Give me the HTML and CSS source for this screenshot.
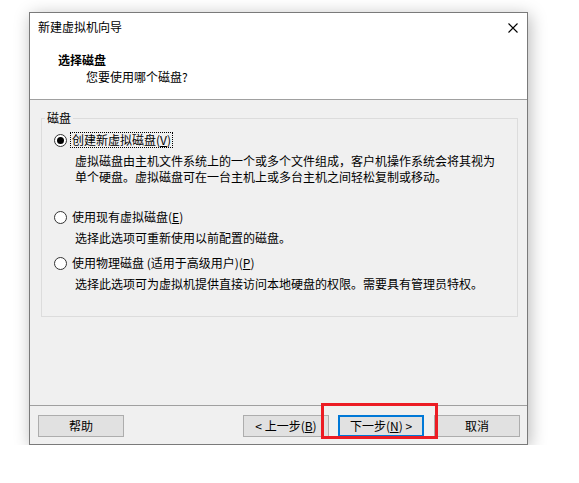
FILE: index.html
```html
<!DOCTYPE html>
<html lang="zh-CN">
<head>
<meta charset="utf-8">
<title>新建虚拟机向导</title>
<link rel="stylesheet" href="styles.css">
</head>
<body>
<div class="window">
  <div class="header">
    <div class="titlebar">
      <span class="title">新建虚拟机向导</span>
      <svg class="close" width="10" height="10" viewBox="0 0 10 10"><path d="M0.5 0.5 L9.5 9.5 M9.5 0.5 L0.5 9.5" stroke="#000" stroke-width="1.1" fill="none"/></svg>
    </div>
    <div class="heading">选择磁盘</div>
    <div class="subheading">您要使用哪个磁盘?</div>
  </div>
  <div class="body">
    <div class="group">
      <span class="legend">磁盘</span>
      <div class="option first">
        <span class="radio checked"></span>
        <span class="label focus">创建新虚拟磁盘(<u>V</u>)</span>
      </div>
      <div class="desc">虚拟磁盘由主机文件系统上的一个或多个文件组成，客户机操作系统会将其视为<br>单个硬盘。虚拟磁盘可在一台主机上或多台主机之间轻松复制或移动。</div>
      <div class="option second">
        <span class="radio"></span>
        <span class="label">使用现有虚拟磁盘(<u>E</u>)</span>
      </div>
      <div class="desc">选择此选项可重新使用以前配置的磁盘。</div>
      <div class="option third">
        <span class="radio"></span>
        <span class="label">使用物理磁盘 (适用于高级用户)(<u>P</u>)</span>
      </div>
      <div class="desc">选择此选项可为虚拟机提供直接访问本地硬盘的权限。需要具有管理员特权。</div>
    </div>
  </div>
  <div class="footer">
    <button class="btn">帮助</button>
    <div class="spacer"></div>
    <button class="btn">&lt; 上一步(<u>B</u>)</button>
    <button class="btn primary">下一步(<u>N</u>) &gt;</button>
    <button class="btn cancel">取消</button>
  </div>
  <div class="highlight"></div>
</div>
</body>
</html>
```
FILE: styles.css
```css
* { box-sizing: border-box; }
html, body { margin: 0; padding: 0; background: #fff; }
body {
  font-family: "Noto Sans CJK SC", "Noto Sans", sans-serif;
  font-size: 12px;
  line-height: 16px;
  color: #000;
  padding: 12px 0 0 29px;
}
.window {
  position: relative;
  width: 499px;
  height: 433px;
  border: 1px solid #7a7a7a;
  background: #f0f0f0;
  display: flex;
  flex-direction: column;
  box-shadow: 2px 3px 16px rgba(0,0,0,0.28);
}
.header {
  background: #fff;
  height: 87px;
  border-bottom: 1px solid #a0a0a0;
}
.titlebar {
  height: 28px;
  display: flex;
  align-items: center;
  padding: 0 9px 0 8px;
}
.title { flex: 1; }
.close { display: block; margin-top: 1px; }
.heading {
  margin-top: 11px;
  padding-left: 28px;
  font-weight: bold;
}
.subheading {
  margin-top: 1px;
  padding-left: 56px;
}
.body {
  padding: 18px 9px 0 11px;
}
.group {
  position: relative;
  height: 199px;
  border: 1px solid #dcdcdc;
  padding: 13px 0 0 12px;
}
.legend {
  position: absolute;
  top: -9px;
  left: 3px;
  padding: 0 2px;
  background: #f0f0f0;
}
.option {
  display: flex;
  align-items: center;
  height: 16px;
}
.option.second { margin-top: 24px; }
.option.third { margin-top: 9px; }
.radio {
  width: 13px;
  height: 13px;
  border: 1px solid #333;
  border-radius: 50%;
  background: #fff;
  position: relative;
  flex: none;
}
.radio.checked::after {
  content: "";
  position: absolute;
  left: 2px;
  top: 2px;
  width: 7px;
  height: 7px;
  border-radius: 50%;
  background: #000;
}
.label {
  margin-left: 3px;
  padding: 0 1px;
  border: 1px dotted transparent;
  line-height: 14px;
}
.label.focus { border-color: #000; }
.desc {
  margin-top: 5px;
  padding-left: 21px;
}
.footer {
  margin-top: auto;
  border-top: 1px solid #a0a0a0;
  padding: 9px 7px 7px 8px;
  display: flex;
}
.spacer { flex: 1; }
.btn {
  font-family: inherit;
  font-size: 12px;
  line-height: 16px;
  color: #000;
  width: 86px;
  height: 22px;
  padding: 0;
  margin: 0;
  border: 1px solid #adadad;
  background: #e1e1e1;
}
.btn.primary {
  margin-left: 9px;
  border: 2px solid #0078d7;
}
.btn.cancel { margin-left: 10px; }
.highlight {
  position: absolute;
  left: 291px;
  top: 390px;
  width: 117px;
  height: 36px;
  border: 3px solid #ec1c24;
}
```
